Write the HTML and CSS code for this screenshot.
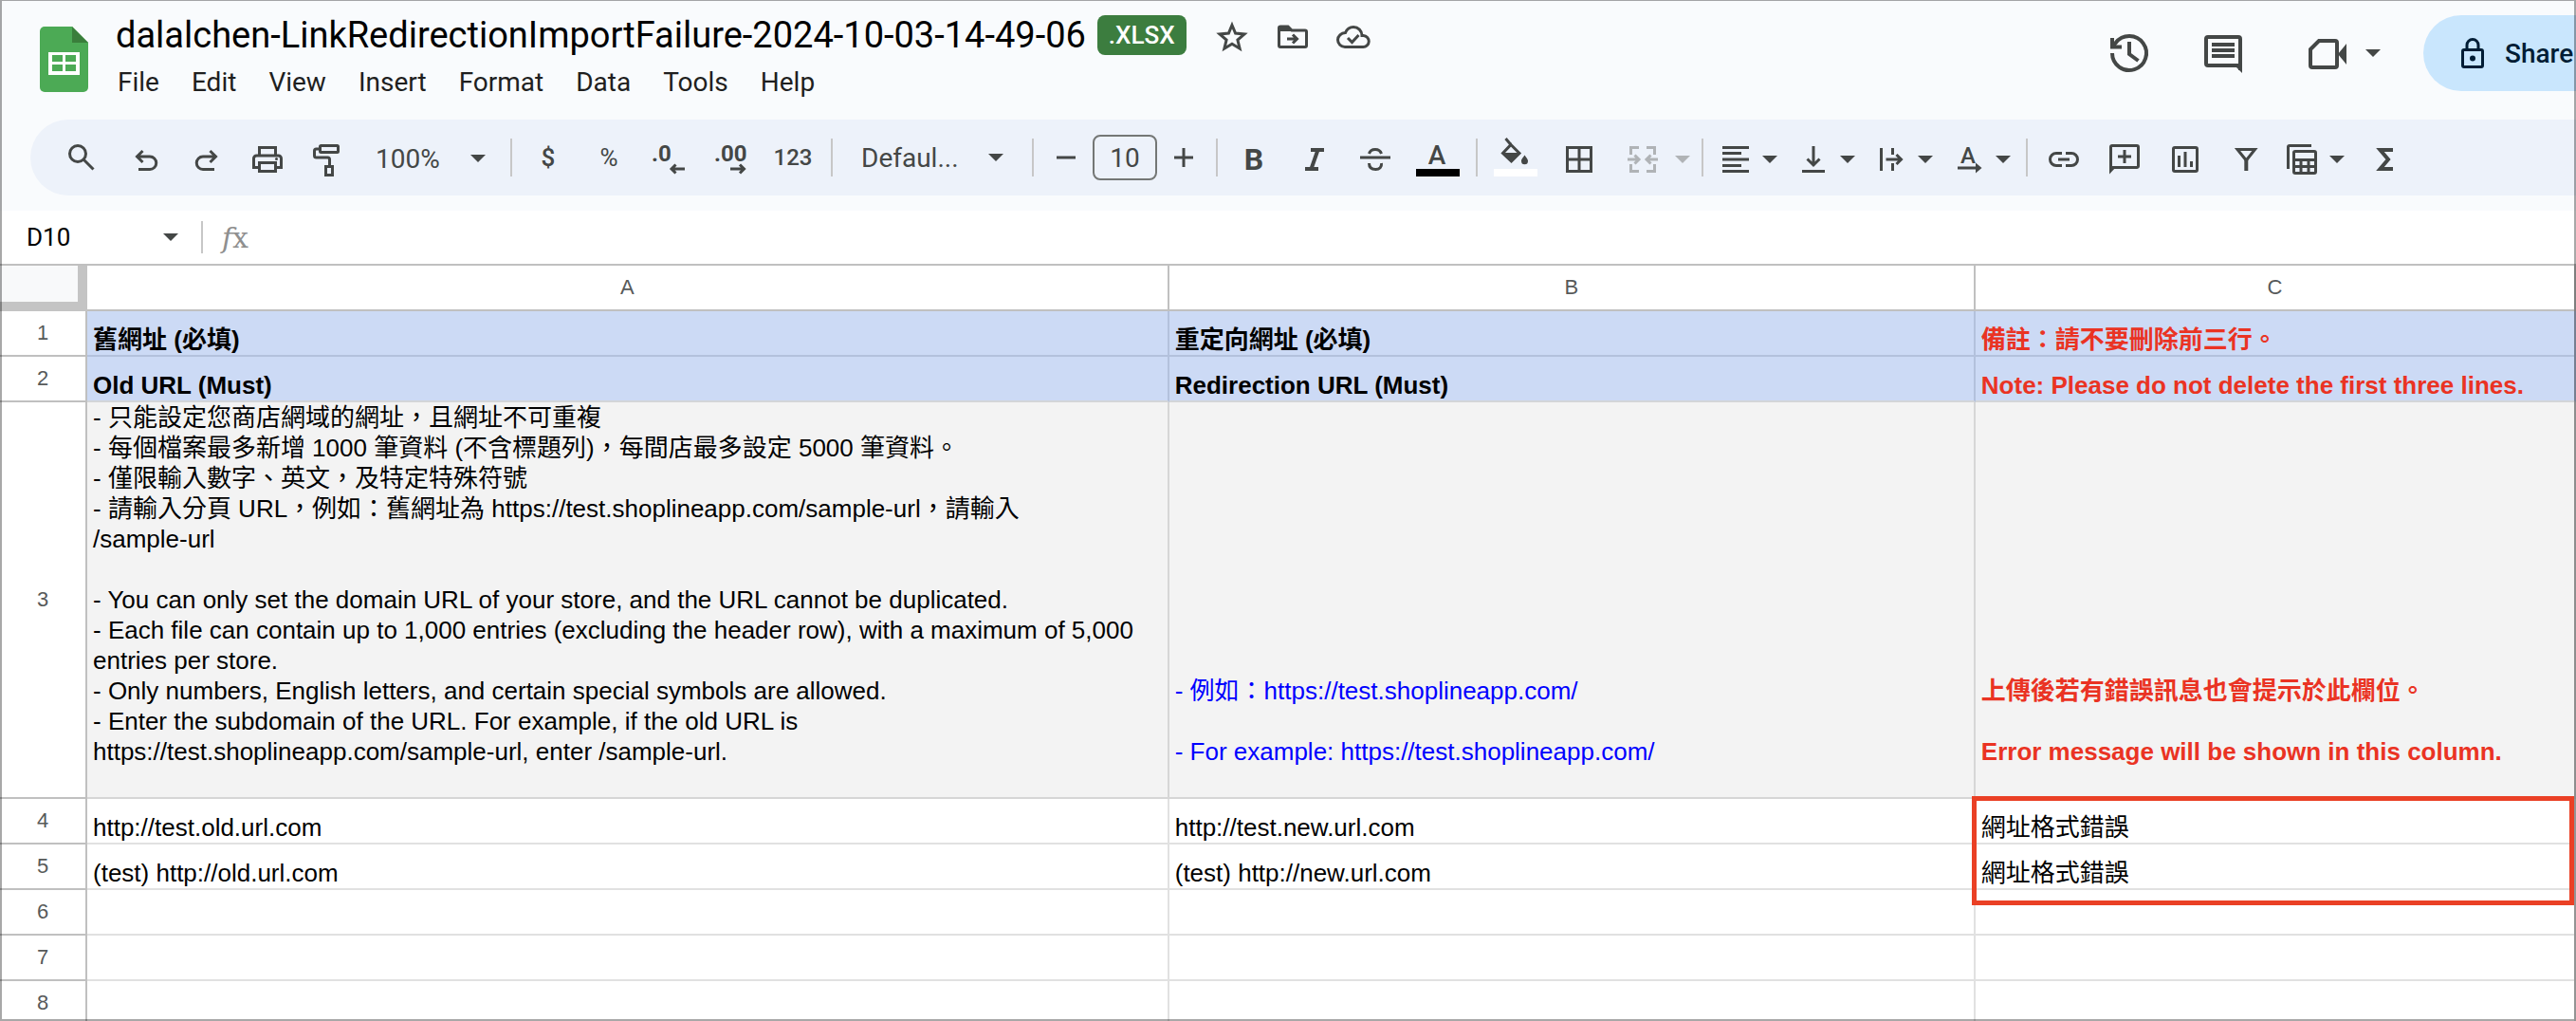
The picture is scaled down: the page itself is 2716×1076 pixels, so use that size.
FILE: index.html
```html
<!DOCTYPE html>
<html lang="zh-Hant">
<head>
  <meta charset="UTF-8" />
  <meta name="viewport" content="width=device-width, initial-scale=1.0" />
  <title>dalalchen-LinkRedirectionImportFailure-2024-10-03-14-49-06</title>
  <link rel="stylesheet" href="styles.css">
</head>
<body>
  <!-- shared dropdown arrow -->
  <svg class="defs" width="0" height="0">
    <symbol id="arrow" viewBox="0 0 16 8"><path d="M0 0h16l-8 8z" fill="currentColor" /></symbol>
  </svg>

  <div class="app">
    <header class="header">
      <div class="top">
        <svg class="logo" viewBox="0 0 52 70">
          <path d="M5 1h29l17 17v47a5 5 0 0 1-5 5H5a5 5 0 0 1-5-5V6a5 5 0 0 1 5-5z" fill="#4caa55" />
          <path d="M34 1l17 17H34z" fill="#3a7e3b" />
          <path d="M9 28h33v24H9z" fill="#fff" />
          <path d="M13 31h11v7H13zM27 31h11v7H27zM13 41h11v7H13zM27 41h11v7H27z" fill="#4caa55" />
        </svg>

        <div class="doc">
          <div class="title-row">
            <h1>dalalchen-LinkRedirectionImportFailure-2024-10-03-14-49-06</h1>
            <span class="badge">.XLSX</span>
            <button class="icon-btn" aria-label="Star">
              <svg class="icon" viewBox="0 0 36 36"><path d="M18 5.5l3.6 8.6 9.4.8-7.1 6.1 2.2 9.2-8.1-4.9-8.1 4.9 2.2-9.2L5 14.9l9.4-.8z" class="line" /></svg>
            </button>
            <button class="icon-btn" aria-label="Move">
              <svg class="icon" viewBox="0 0 36 36">
                <path d="M3.5 8.5A1.5 1.5 0 0 1 5 7h8l4 4h14a1.5 1.5 0 0 1 1.5 1.5V27a1.5 1.5 0 0 1-1.5 1.5H5A1.5 1.5 0 0 1 3.5 27z" class="line" />
                <path d="M4 7h9l4 5H4z" class="solid" />
                <path d="M12 20h10M18 15.5l4.5 4.5-4.5 4.5" class="line" />
              </svg>
            </button>
            <button class="icon-btn" aria-label="Saved to Drive">
              <svg class="icon" viewBox="0 0 36 36">
                <path d="M9 28.5h19a6 6 0 0 0 .5-12H27c0-5-4-9-9-9-4 0-7 2.5-8.5 6-4.5.2-8 3.5-8 7.5S4.800 28.500 9 28.500z" class="line" />
                <path d="M12 19l4.5 4.5 7-7.5" class="line" />
              </svg>
            </button>
          </div>
          <nav class="menu">
            <button>File</button>
            <button>Edit</button>
            <button>View</button>
            <button>Insert</button>
            <button>Format</button>
            <button>Data</button>
            <button>Tools</button>
            <button>Help</button>
          </nav>
        </div>

        <div class="actions">
          <button class="action-btn" aria-label="Version history">
            <svg class="icon-lg" viewBox="0 0 48 48">
              <path d="M5 24A18 18 0 1 0 8.6 13.2L5.5 17" class="line wide" />
              <path d="M5 8v9.5h10" class="line wide" />
              <path d="M23 12v13l9.5 7" class="line wide" />
            </svg>
          </button>
          <button class="action-btn" aria-label="Comments">
            <svg class="icon-lg" viewBox="0 0 48 48">
              <path d="M42 42V9a2 2 0 0 0-2-2H8a2 2 0 0 0-2 2v26a2 2 0 0 0 2 2h34" class="line wide" />
              <path d="M36 37h8v8z" class="solid" />
              <path d="M12 15h24M12 21h24M12 27h24" class="line wide" />
            </svg>
          </button>
          <button class="action-btn meet" aria-label="Join a call">
            <svg class="icon-lg" viewBox="0 0 48 48">
              <path d="M6 20l9-9h17a2 2 0 0 1 2 2v24a2 2 0 0 1-2 2H8a2 2 0 0 1-2-2z" class="line wide" />
              <path d="M35 25l9-11v22z" class="solid" />
            </svg>
            <svg class="arrow"><use href="#arrow" /></svg>
          </button>
          <button class="share">
            <svg class="icon" viewBox="0 0 36 36">
              <path d="M9 14.5h18a1.5 1.5 0 0 1 1.5 1.5v15a1.5 1.5 0 0 1-1.5 1.5H9A1.5 1.5 0 0 1 7.5 31V16A1.5 1.5 0 0 1 9 14.5zM12 14V9.5a6 6 0 0 1 12 0V14" class="line" />
              <circle cx="18" cy="23.5" r="3" class="solid" />
            </svg>
            Share
          </button>
        </div>
      </div>

      <div class="toolbar">
        <button class="tool search" aria-label="Search the menus">
          <svg class="icon" viewBox="0 0 36 36"><circle cx="14" cy="12" r="8.5" class="line" /><path d="M20 18l10.500 10.500" class="line" /></svg>
        </button>
        <button class="tool" aria-label="Undo">
          <svg class="icon" viewBox="0 0 36 36"><path d="M14.5 9l-6 6 6 6M9 15h13a6.500 6.500 0 0 1 0 13.500H10" class="line" /></svg>
        </button>
        <button class="tool" aria-label="Redo">
          <svg class="icon" viewBox="0 0 36 36"><path d="M21.5 9l6 6-6 6M27 15H14a6.500 6.500 0 0 0 0 13.500h12" class="line" /></svg>
        </button>
        <button class="tool" aria-label="Print">
          <svg class="icon" viewBox="0 0 36 36">
            <path d="M9.5 13V5.5h17V13M9 26.500H3.500V17a3 3 0 0 1 3-3h23a3 3 0 0 1 3 3v9.500H27M9.500 21.500h17v9h-17z" class="line" />
            <circle cx="27.500" cy="17.500" r="1.500" class="solid" />
          </svg>
        </button>
        <button class="tool" aria-label="Paint format">
          <svg class="icon" viewBox="0 0 36 36">
            <path d="M9.5 4.500a1 1 0 0 1 1-1h17a1 1 0 0 1 1 1v5a1 1 0 0 1-1 1h-17a1 1 0 0 1-1-1zM8 7H5.500a2 2 0 0 0-2 2v5a2 2 0 0 0 2 2h12a2 2 0 0 1 2 2v6M15.500 25.500h7v9h-7z" class="line" />
          </svg>
        </button>
        <label class="picker zoom">
          <select aria-label="Zoom"><option>100%</option></select>
          <svg class="arrow"><use href="#arrow" /></svg>
        </label>

        <span class="sep"></span>

        <button class="tool currency">$</button>
        <button class="tool percent">%</button>
        <button class="tool" aria-label="Decrease decimal places">
          <svg class="icon" viewBox="0 0 36 36">
            <text x="-1" y="20" class="decimal">.0</text>
            <path d="M20 28h14M24.5 23.5L20 28l4.5 4.5" class="line" />
          </svg>
        </button>
        <button class="tool" aria-label="Increase decimal places">
          <svg class="icon" viewBox="0 0 36 36">
            <text x="1" y="20" class="decimal">.00</text>
            <path d="M18 28h14M28 23.5l4.500 4.500-4.500 4.500" class="line" />
          </svg>
        </button>
        <button class="tool formats">123</button>

        <span class="sep"></span>

        <label class="picker font">
          <select aria-label="Font"><option>Defaul...</option></select>
          <svg class="arrow"><use href="#arrow" /></svg>
        </label>

        <span class="sep"></span>

        <div class="size">
          <button class="tool" aria-label="Decrease font size">
            <svg class="icon" viewBox="0 0 36 36"><path d="M8 16h20" class="line" /></svg>
          </button>
          <input type="text" value="10" aria-label="Font size">
          <button class="tool" aria-label="Increase font size">
            <svg class="icon" viewBox="0 0 36 36"><path d="M8 16h20M18 6v20" class="line" /></svg>
          </button>
        </div>

        <span class="sep"></span>

        <button class="tool bold">B</button>
        <button class="tool" aria-label="Italic">
          <svg class="icon" viewBox="0 0 36 36"><path d="M14 8h14M8 28h14M21.5 8l-7 20" class="line wide" /></svg>
        </button>
        <button class="tool" aria-label="Strikethrough">
          <svg class="icon" viewBox="0 0 36 36"><path d="M2 16h32M11.5 12c.8-3 3.500-4.500 6.500-4.500s5.500 1.500 6.500 4.500M11.500 22c0 4.500 3 6.500 7 6.500s6.500-2.500 6-6.500" class="line" /></svg>
        </button>
        <button class="tool color" aria-label="Text color">
          <svg class="swatch" viewBox="0 0 46 52">
            <text x="22" y="31" text-anchor="middle" class="letter">A</text>
            <path d="M0 36h46v8H0z" fill="#000" />
          </svg>
        </button>

        <span class="sep"></span>

        <button class="tool color" aria-label="Fill color">
          <svg class="swatch" viewBox="0 0 46 52">
            <path d="M12.5 4l5.500 6.500" class="line" />
            <path d="M18 10.5l9 9-8.500 8.500-9-8.500z" class="line" />
            <path d="M9 19h19l-9.500 10z" class="solid" />
            <path d="M32.5 21.500c2.500 3.500 3.500 4.500 3.500 6.200a3.500 3.500 0 0 1-7 0c0-1.700 1-2.700 3.500-6.200z" class="solid" />
            <path d="M0 36h46v8H0z" fill="#fff" />
          </svg>
        </button>
        <button class="tool color" aria-label="Borders">
          <svg class="icon" viewBox="0 0 36 36"><path d="M4.5 5.500h25v25h-25zM17 5v26M4 18h26" class="line" /></svg>
        </button>
        <button class="tool split merge" aria-label="Merge cells" disabled>
          <svg class="icon" viewBox="0 0 36 36"><path d="M14 5.500H5.500V13M5.500 23v7.500H14M22 5.500h8.500V13M30.500 23v7.500H22M2 18h11M9.500 13.500L14 18l-4.500 4.500M34 18H23M26.500 13.500L22 18l4.500 4.500" class="line" /></svg>
          <svg class="arrow"><use href="#arrow" /></svg>
        </button>

        <span class="sep"></span>

        <button class="tool split" aria-label="Horizontal align">
          <svg class="icon" viewBox="0 0 36 36"><path d="M4 5.500h28M4 11.500h20M4 18h28M4 24.500h20M4 30.500h28" class="line" /></svg>
          <svg class="arrow"><use href="#arrow" /></svg>
        </button>
        <button class="tool split" aria-label="Vertical align">
          <svg class="icon" viewBox="0 0 36 36"><path d="M6 30.500h24M18 4v20M11.500 17.500l6.500 6.500 6.500-6.500" class="line" /></svg>
          <svg class="arrow"><use href="#arrow" /></svg>
        </button>
        <button class="tool split" aria-label="Text wrapping">
          <svg class="icon" viewBox="0 0 36 36"><path d="M7.500 6v24M19.500 6v7M19.500 22v8M12.500 18H28M23.500 13l5 5-5 5" class="line" /></svg>
          <svg class="arrow"><use href="#arrow" /></svg>
        </button>
        <button class="tool split" aria-label="Text rotation">
          <svg class="icon" viewBox="0 0 36 36">
            <text x="17" y="22" text-anchor="middle" class="decimal regular">A</text>
            <path d="M6 27h20" class="line" />
            <path d="M25 21.500l6.500 5.500-6.500 5.500z" class="solid" />
          </svg>
          <svg class="arrow"><use href="#arrow" /></svg>
        </button>

        <span class="sep"></span>

        <button class="tool" aria-label="Insert link">
          <svg class="icon" viewBox="0 0 36 36"><path d="M16 11.500h-6a6.500 6.500 0 0 0 0 13h6M20 11.500h6a6.500 6.500 0 0 1 0 13h-6M12 18h12" class="line" /></svg>
        </button>
        <button class="tool" aria-label="Insert comment">
          <svg class="icon" viewBox="0 0 36 36">
            <path d="M3.500 30V5A1.500 1.500 0 0 1 5 3.500h26A1.500 1.500 0 0 1 32.500 5v20a1.500 1.500 0 0 1-1.500 1.500H4M11 15h14M18 8v14" class="line" />
            <path d="M2 25h8l-8 8.500z" class="solid" />
          </svg>
        </button>
        <button class="tool" aria-label="Insert chart">
          <svg class="icon" viewBox="0 0 36 36"><path d="M7 5.500h22A1.500 1.500 0 0 1 30.500 7v22a1.500 1.500 0 0 1-1.500 1.500H7A1.500 1.500 0 0 1 5.500 29V7A1.500 1.500 0 0 1 7 5.500zM11.500 14v12M18 10v16M24.500 20v6" class="line" /></svg>
        </button>
        <button class="tool" aria-label="Create a filter">
          <svg class="icon" viewBox="0 0 36 36"><path d="M9 7.500h18.500L18.300 19z" class="line" /><path d="M18.300 18v12" class="line wide" /></svg>
        </button>
        <button class="tool split" aria-label="Table views">
          <svg class="icon" viewBox="0 0 36 36">
            <path d="M2.500 28V5A1.500 1.500 0 0 1 4 3.500h23" class="line" />
            <path d="M10 9.500h20a1.500 1.500 0 0 1 1.500 1.500v20a1.500 1.500 0 0 1-1.500 1.500H10A1.500 1.500 0 0 1 8.500 31V11A1.500 1.500 0 0 1 10 9.500zM8 18.500h24M8 25.500h24M16 18v14M24 18v14" class="line" />
          </svg>
          <svg class="arrow"><use href="#arrow" /></svg>
        </button>
        <button class="tool" aria-label="Functions">
          <svg class="icon" viewBox="0 0 36 36"><path d="M27 8H13.500l8.500 10-8.500 10H27" class="line wide" /></svg>
        </button>
      </div>
    </header>

    <div class="formula-bar">
      <input type="text" class="name-box" value="D10" aria-label="Name box">
      <svg class="arrow"><use href="#arrow" /></svg>
      <span class="sep"></span>
      <label for="formula" class="fx"><i>f</i>x</label>
      <input type="text" id="formula" class="formula">
    </div>

    <div class="sheet">
      <table class="grid">
        <colgroup>
          <col class="col-num">
          <col class="col-a">
          <col class="col-b">
          <col>
        </colgroup>
        <thead>
          <tr>
            <th class="corner"><button aria-label="Select all"></button></th>
            <th>A</th>
            <th>B</th>
            <th>C</th>
          </tr>
        </thead>
        <tbody>
          <tr class="head">
            <th>1</th>
            <td>舊網址 (必填)</td>
            <td>重定向網址 (必填)</td>
            <td class="red">備註：請不要刪除前三行。</td>
          </tr>
          <tr class="head last">
            <th>2</th>
            <td>Old URL (Must)</td>
            <td>Redirection URL (Must)</td>
            <td class="red">Note: Please do not delete the first three lines.</td>
          </tr>
          <tr class="notes">
            <th>3</th>
            <td>- 只能設定您商店網域的網址，且網址不可重複<br>
              - 每個檔案最多新增 1000 筆資料 (不含標題列)，每間店最多設定 5000 筆資料。<br>
              - 僅限輸入數字、英文，及特定特殊符號<br>
              - 請輸入分頁 URL，例如：舊網址為 https://test.shoplineapp.com/sample-url，請輸入<br>
              /sample-url<br>
              <br>
              - You can only set the domain URL of your store, and the URL cannot be duplicated.<br>
              - Each file can contain up to 1,000 entries (excluding the header row), with a maximum of 5,000<br>
              entries per store.<br>
              - Only numbers, English letters, and certain special symbols are allowed.<br>
              - Enter the subdomain of the URL. For example, if the old URL is<br>
              https://test.shoplineapp.com/sample-url, enter /sample-url.<br>
              <br>
            </td>
            <td class="blue">- 例如：https://test.shoplineapp.com/<br>
              <br>
              - For example: https://test.shoplineapp.com/<br>
              <br>
            </td>
            <td class="red">上傳後若有錯誤訊息也會提示於此欄位。<br>
              <br>
              Error message will be shown in this column.<br>
              <br>
            </td>
          </tr>
          <tr>
            <th>4</th>
            <td>http://test.old.url.com</td>
            <td>http://test.new.url.com</td>
            <td class="marked">網址格式錯誤<span class="mark-box"></span></td>
          </tr>
          <tr>
            <th>5</th>
            <td>(test) http://old.url.com</td>
            <td>(test) http://new.url.com</td>
            <td>網址格式錯誤</td>
          </tr>
          <tr><th>6</th><td></td><td></td><td></td></tr>
          <tr><th>7</th><td></td><td></td><td></td></tr>
          <tr><th>8</th><td></td><td></td><td></td></tr>
        </tbody>
      </table>
    </div>
  </div>
</body>
</html>
```

FILE: styles.css
```css
* {
  margin: 0;
  padding: 0;
  box-sizing: border-box;
}

body {
  font-family: Roboto, "Noto Sans CJK TC", sans-serif;
  font-size: 28px;
  color: #444746;
  background: #fff;
}

button,
input,
select {
  font: inherit;
  color: inherit;
  background: none;
  border: none;
  outline: none;
}

button {
  cursor: pointer;
}

.defs {
  position: absolute;
}

.app {
  height: 100vh;
  overflow: hidden;
  position: relative;
}

/* thin frame over the whole window */
.app::after {
  content: "";
  position: absolute;
  inset: 0;
  border: 2px solid rgba(0, 0, 0, 0.34);
  border-top-width: 1px;
  pointer-events: none;
}

/* icons */
.icon,
.icon-lg,
.arrow,
.logo,
.swatch {
  display: block;
  flex: none;
}

.icon {
  width: 36px;
  height: 36px;
  overflow: visible;
}

.icon-lg {
  width: 48px;
  height: 48px;
}

.arrow {
  width: 16px;
  height: 8px;
  pointer-events: none;
}

.line {
  fill: none;
  stroke: currentColor;
  stroke-width: 3;
}

.wide {
  stroke-width: 4;
}

.solid {
  fill: currentColor;
}

/* header */
.header {
  background: #f9fbfd;
  padding-bottom: 16px;
}

.top {
  display: flex;
  height: 126px;
  padding: 16px 0 0 42px;
}

.logo {
  width: 52px;
  height: 70px;
  margin-top: 11px;
}

.doc {
  margin-left: 28px;
  flex: 1;
}

.title-row {
  display: flex;
  align-items: center;
  height: 42px;
}

.title-row h1 {
  font-size: 38px;
  font-weight: 400;
  color: #000;
  white-space: nowrap;
}

.badge {
  margin: 0 16px 0 12px;
  padding: 0 12px;
  border-radius: 8px;
  background: #3c7d3f;
  color: #fff;
  font-size: 26px;
  font-weight: 500;
  line-height: 42px;
}

.icon-btn {
  width: 64px;
  height: 42px;
  padding-top: 4px;
  display: flex;
  align-items: center;
  justify-content: center;
}

.menu {
  display: flex;
  gap: 30px;
  margin-top: 8px;
}

.menu button {
  height: 40px;
  padding: 0 2px;
  color: #1f1f1f;
}

.actions {
  display: flex;
  gap: 18px;
  height: 80px;
}

.action-btn {
  width: 80px;
  display: flex;
  align-items: center;
  justify-content: center;
}

.meet {
  width: 135px;
  gap: 16px;
}

.share {
  width: 161px;
  padding-left: 34px;
  display: flex;
  align-items: center;
  gap: 16px;
  border-radius: 40px 0 0 40px;
  background: #c9e6fd;
  color: #001d35;
  font-weight: 500;
}

/* toolbar */
.toolbar {
  display: flex;
  align-items: center;
  height: 80px;
  margin-left: 32px;
  padding-left: 22px;
  border-radius: 40px 0 0 40px;
  background: #edf2fa;
  overflow: hidden;
}

.tool {
  width: 64px;
  height: 64px;
  padding-top: 4px;
  flex: none;
  display: flex;
  align-items: center;
  justify-content: center;
}

.search {
  margin-right: 4px;
}

.sep {
  flex: none;
  width: 2px;
  height: 40px;
  margin: 0 6px;
  background: #c7c7c7;
}

.picker {
  flex: none;
  display: flex;
  align-items: center;
  justify-content: space-between;
}

.picker select {
  appearance: none;
  height: 40px;
}

.zoom {
  width: 154px;
  padding: 2px 20px 0 18px;
}

.font {
  width: 198px;
  padding: 0 24px;
}

.currency,
.percent,
.formats {
  font-size: 26px;
  font-weight: 500;
  padding-top: 0;
}

.percent {
  font-weight: 400;
}

.formats {
  font-size: 24px;
}

.formats,
.color {
  width: 68px;
}

.decimal {
  font-size: 24px;
  font-weight: 700;
  fill: currentColor;
}

.regular {
  font-weight: 500;
}

.letter {
  font-size: 28px;
  font-weight: 500;
  fill: currentColor;
}

.swatch {
  width: 46px;
  height: 52px;
}

.size {
  display: flex;
  align-items: center;
  flex: none;
}

.size .tool {
  width: 56px;
}

.size input {
  width: 68px;
  height: 48px;
  border: 2px solid #747775;
  border-radius: 8px;
  text-align: center;
}

.bold {
  font-size: 32px;
  font-weight: 700;
}

.split {
  width: 82px;
  gap: 10px;
  justify-content: flex-start;
  padding-left: 10px;
}

.merge {
  width: 88px;
  padding-left: 14px;
  gap: 16px;
  color: #b0b3b6;
}

/* formula bar */
.formula-bar {
  display: flex;
  align-items: center;
  height: 58px;
  padding-left: 28px;
  border-bottom: 2px solid #c0c0c0;
}

.name-box {
  width: 144px;
  font-size: 26px;
  color: #000;
}

.formula-bar .sep {
  height: 34px;
  margin: 0 20px 0 24px;
}

.fx {
  font-family: "DejaVu Serif", serif;
  font-size: 30px;
  color: #8f8f8f;
}

.formula {
  flex: 1;
  margin-left: 16px;
}

/* sheet */
.sheet {
  font-family: "Liberation Sans", "Noto Sans CJK TC", sans-serif;
  font-size: 26px;
  line-height: 32px;
  color: #000;
}

.grid {
  width: 100%;
  table-layout: fixed;
  border-collapse: separate;
  border-spacing: 0;
}

.col-num {
  width: 92px;
}

.col-a {
  width: 42%;
}

.col-b {
  width: 31.3%;
}

.grid th {
  height: 48px;
  border-right: 2px solid #c0c0c0;
  border-bottom: 2px solid #c0c0c0;
  font-size: 22px;
  font-weight: 400;
  color: #575a5a;
  vertical-align: middle;
}

.grid td {
  height: 48px;
  padding: 0 6px;
  border-right: 2px solid #e1e1e1;
  border-bottom: 2px solid #e1e1e1;
  vertical-align: bottom;
  white-space: nowrap;
}

.grid .corner {
  border-color: #c4c4c4;
}

.corner button {
  display: block;
  width: 100%;
  height: 46px;
  background: #f8f9fa;
  border-right: 8px solid #c4c4c4;
  border-bottom: 8px solid #c4c4c4;
}

.grid .head td {
  background: #ccdaf5;
  border-color: #b3c1dc;
  font-weight: 700;
}

.grid .last td {
  border-bottom-color: #d3d5d8;
}

.grid .notes td {
  background: #f3f3f3;
  border-color: #d6d6d6;
}

.grid .red {
  color: #ea3323;
  font-weight: 700;
}

.blue {
  color: #00f;
}

.marked {
  position: relative;
}

/* highlight around the error messages */
.mark-box {
  position: absolute;
  top: -3px;
  left: -4px;
  right: 0;
  height: 115px;
  border: 5px solid #ea4025;
}
```
